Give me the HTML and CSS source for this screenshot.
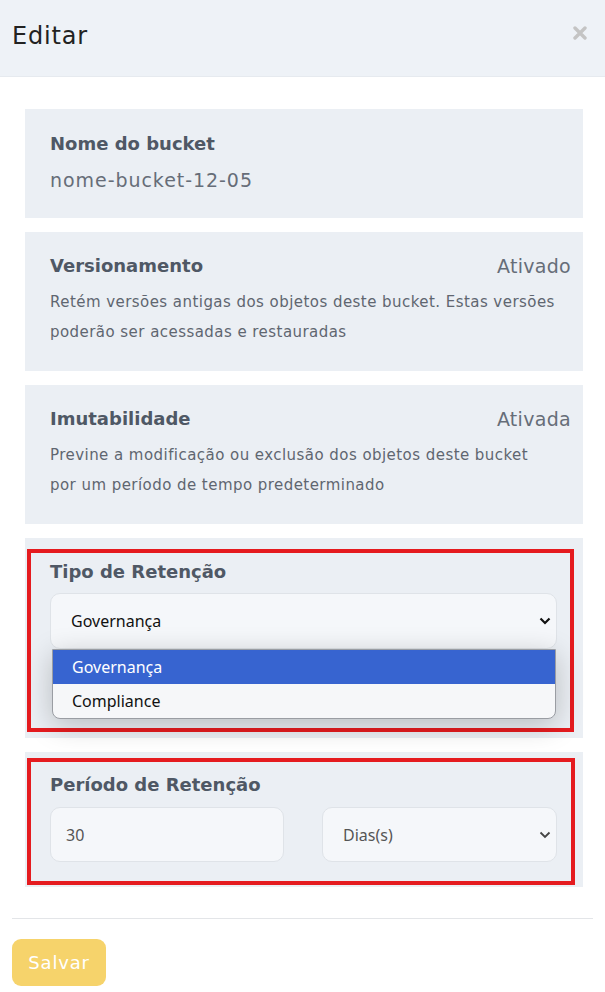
FILE: index.html
```html
<!DOCTYPE html>
<html lang="pt-BR">
<head>
<meta charset="utf-8">
<title>Editar</title>
<link rel="stylesheet" href="styles.css">
</head>
<body>
<div class="modal">
  <header class="modal-header">
    <h1 class="modal-title">Editar</h1>
    <button class="close" aria-label="Fechar">
      <svg width="14" height="14" viewBox="0 0 14 14"><path d="M2 2 L12 12 M12 2 L2 12" stroke="#c4c4c4" stroke-width="3.4" stroke-linecap="round"/></svg>
    </button>
  </header>

  <div class="modal-body">
    <section class="card card-name">
      <div class="card-title">Nome do bucket</div>
      <div class="card-value">nome-bucket-12-05</div>
    </section>

    <section class="card">
      <div class="card-row">
        <div class="card-title">Versionamento</div>
        <div class="card-status">Ativado</div>
      </div>
      <p class="card-desc">Retém versões antigas dos objetos deste bucket. Estas versões poderão ser acessadas e restauradas</p>
    </section>

    <section class="card">
      <div class="card-row">
        <div class="card-title">Imutabilidade</div>
        <div class="card-status">Ativada</div>
      </div>
      <p class="card-desc">Previne a modificação ou exclusão dos objetos deste bucket<br>por um período de tempo predeterminado</p>
    </section>

    <section class="card card-field">
      <div class="highlight highlight-type">
        <div class="card-title">Tipo de Retenção</div>
        <div class="select-wrap">
          <div class="select select-open">
            <span>Governança</span>
            <svg class="chev" width="12" height="8" viewBox="0 0 12 8"><path d="M1.5 1.5 L6 6 L10.5 1.5" fill="none" stroke="#111" stroke-width="2.2"/></svg>
          </div>
          <ul class="dropdown">
            <li class="opt active">Governança</li>
            <li class="opt">Compliance</li>
          </ul>
        </div>
        <div class="hidden-space"></div>
      </div>
    </section>

    <section class="card card-field">
      <div class="highlight highlight-period">
        <div class="card-title">Período de Retenção</div>
        <div class="period-row">
          <div class="input">30</div>
          <div class="select">
            <span>Dias(s)</span>
            <svg class="chev" width="12" height="8" viewBox="0 0 12 8"><path d="M1.5 1.5 L6 6 L10.5 1.5" fill="none" stroke="#444" stroke-width="1.8"/></svg>
          </div>
        </div>
      </div>
    </section>
  </div>

  <footer class="modal-footer">
    <button class="btn-save">Salvar</button>
  </footer>
</div>
</body>
</html>
```
FILE: styles.css
```css
* { box-sizing: border-box; }
html, body { margin: 0; padding: 0; background: #fff; }
body { font-family: "DejaVu Sans", "Open Sans", sans-serif; width: 605px; }

.modal-header {
  height: 77px;
  background: #eef2f7;
  border-bottom: 1px solid #e6eaef;
  display: flex;
  align-items: center;
  justify-content: space-between;
  padding: 0 18px 4px 12px;
}
.modal-title {
  margin: 0;
  font-size: 24px;
  font-weight: 400;
  color: #222;
  letter-spacing: 0.8px;
}
.close {
  background: none;
  border: 0;
  padding: 0;
  display: flex;
  margin-top: -6px;
}

.modal-body {
  padding: 32px 22px 0 25px;
  display: flex;
  flex-direction: column;
  gap: 14px;
}
.card {
  background: #ebeff4;
  padding: 19px 12px 24px 25px;
}
.card-name { padding-top: 20px; padding-bottom: 23px; }
.card-title {
  font-weight: 700;
  font-size: 18px;
  line-height: 30px;
  color: #4f5865;
}
.card-value {
  margin-top: 6px;
  font-size: 19px;
  line-height: 30px;
  color: #666d78;
  letter-spacing: 0.95px;
}
.card-row {
  display: flex;
  justify-content: space-between;
  align-items: center;
}
.card-status {
  font-size: 19px;
  line-height: 30px;
  color: #666d78;
  letter-spacing: 0.3px;
}
.card-desc {
  margin: 6px 0 0;
  font-size: 15px;
  line-height: 30px;
  color: #5f6670;
  letter-spacing: 0.45px;
}

.card-field { padding: 0; }
.highlight {
  border: 4px solid #e51b1f;
}
.highlight-type {
  margin: 11px 9px 6px 2px;
  padding: 4px 13px 0 19px;
}
.highlight-period {
  margin: 6px 8px 2px 2px;
  padding: 8px 14px 19px 19px;
}
.select-wrap {
  position: relative;
  margin-top: 6px;
}
.select, .input {
  height: 56px;
  background: #f5f7fa;
  border: 1px solid #dfe3e8;
  border-radius: 10px;
  display: flex;
  align-items: center;
  justify-content: space-between;
  padding: 0 5px 0 20px;
  font-family: "Noto Sans", "Open Sans", sans-serif;
  font-size: 16px;
  color: #111;
}
.period-row .select, .period-row .input {
  height: 55px;
  color: #555;
}
.chev { flex: none; }
.hidden-space { height: 79px; }
.dropdown {
  position: absolute;
  left: 2px;
  right: 1px;
  top: 56px;
  margin: 0;
  padding: 0;
  list-style: none;
  background: #f6f7f9;
  border: 1px solid #9a9da3;
  border-radius: 0 0 8px 8px;
  overflow: hidden;
  box-shadow: 0 6px 28px rgba(0, 0, 0, 0.22);
  font-family: "Noto Sans", "Open Sans", sans-serif;
  font-size: 16px;
  z-index: 5;
}
.opt {
  height: 34px;
  display: flex;
  align-items: center;
  padding-left: 19px;
  color: #111;
}
.opt.active {
  background: #3764d0;
  color: #fff;
}
.period-row {
  margin-top: 7px;
  display: grid;
  grid-template-columns: 234px 235px;
  justify-content: space-between;
}
.input { padding-left: 15px; }

.modal-footer {
  margin: 31px 12px 0;
  border-top: 1px solid #e3e5e8;
  padding-top: 20px;
}
.btn-save {
  width: 94px;
  height: 47px;
  border: 0;
  border-radius: 9px;
  background: #f6d36b;
  color: #fff;
  font-family: "DejaVu Sans", sans-serif;
  font-size: 18px;
  font-weight: 400;
  letter-spacing: 0.8px;
  padding: 0;
}
```
